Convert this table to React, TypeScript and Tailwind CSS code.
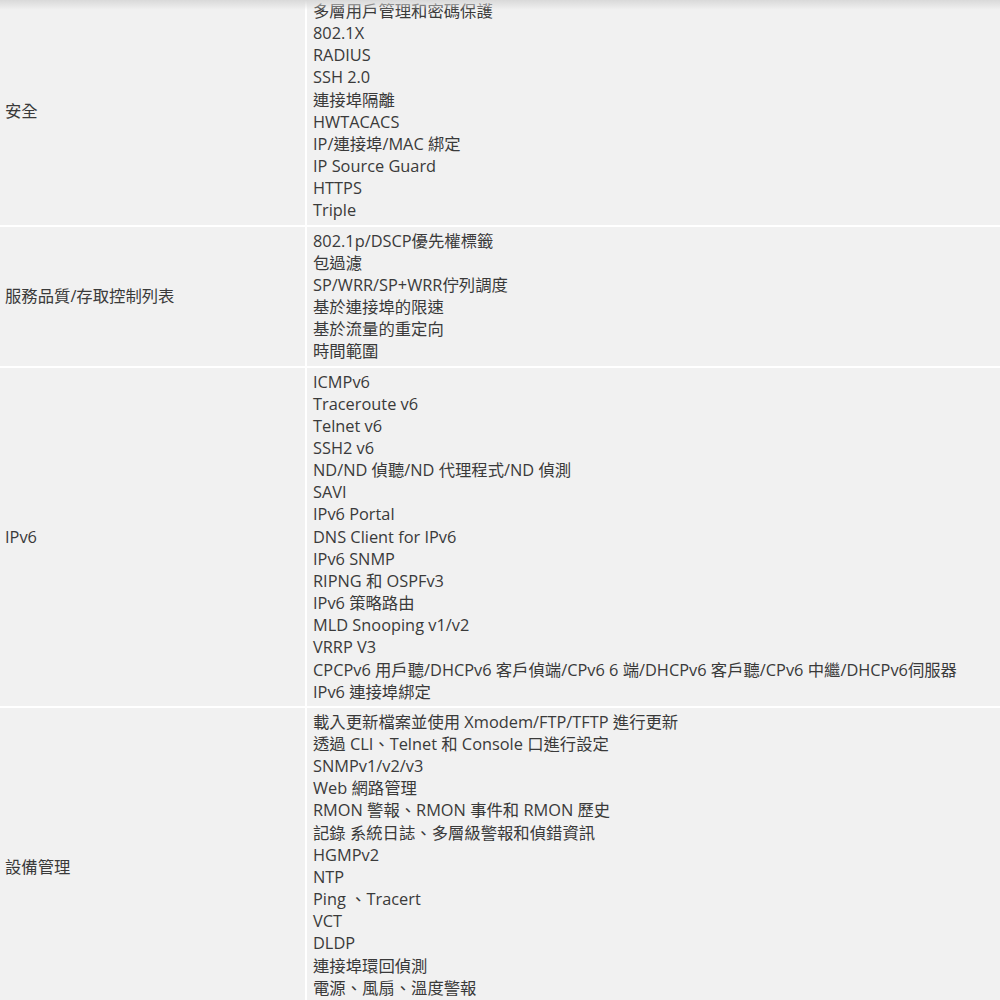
const rows = [
  {
    label: "安全",
    items: [
      "多層用戶管理和密碼保護",
      "802.1X",
      "RADIUS",
      "SSH 2.0",
      "連接埠隔離",
      "HWTACACS",
      "IP/連接埠/MAC 綁定",
      "IP Source Guard",
      "HTTPS",
      "Triple",
    ],
  },
  {
    label: "服務品質/存取控制列表",
    items: [
      "802.1p/DSCP優先權標籤",
      "包過濾",
      "SP/WRR/SP+WRR佇列調度",
      "基於連接埠的限速",
      "基於流量的重定向",
      "時間範圍",
    ],
  },
  {
    label: "IPv6",
    items: [
      "ICMPv6",
      "Traceroute v6",
      "Telnet v6",
      "SSH2 v6",
      "ND/ND 偵聽/ND 代理程式/ND 偵測",
      "SAVI",
      "IPv6 Portal",
      "DNS Client for IPv6",
      "IPv6 SNMP",
      "RIPNG 和 OSPFv3",
      "IPv6 策略路由",
      "MLD Snooping v1/v2",
      "VRRP V3",
      "CPCPv6 用戶聽/DHCPv6 客戶偵端/CPv6 6 端/DHCPv6 客戶聽/CPv6 中繼/DHCPv6伺服器",
      "IPv6 連接埠綁定",
    ],
  },
  {
    label: "設備管理",
    items: [
      "載入更新檔案並使用 Xmodem/FTP/TFTP 進行更新",
      "透過 CLI、Telnet 和 Console 口進行設定",
      "SNMPv1/v2/v3",
      "Web 網路管理",
      "RMON 警報、RMON 事件和 RMON 歷史",
      "記錄 系統日誌、多層級警報和偵錯資訊",
      "HGMPv2",
      "NTP",
      "Ping 、Tracert",
      "VCT",
      "DLDP",
      "連接埠環回偵測",
      "電源、風扇、溫度警報",
    ],
  },
];

export default function App() {
  return (
    <div
      className="relative h-[1000px] w-[1000px] overflow-hidden bg-[#f1f1f1] text-[16.35px] leading-[22.15px] text-[#3a3a3a]"
      style={{ fontFamily: '"Open Sans", "Noto Sans CJK TC", sans-serif' }}
    >
      <table className="w-full border-collapse">
        <tbody>
          {rows.map((row, i) => {
            const pad = i === 0 ? "pt-0 pb-[3px]" : "pt-[3px] pb-[3px]";
            return (
              <tr key={row.label} className={i > 0 ? "border-t-2 border-white" : ""}>
                <td className={`w-[306px] border-r-2 border-white pl-[5px] align-middle ${pad}`}>
                  {row.label}
                </td>
                <td className={`pl-[6px] align-top ${pad}`}>
                  {row.items.map((item) => (
                    <div key={item} className="whitespace-nowrap">{item}</div>
                  ))}
                  {/* row continues below the fold */}
                  {i === rows.length - 1 && <div className="h-[24px]" />}
                </td>
              </tr>
            );
          })}
        </tbody>
      </table>
      <div className="pointer-events-none absolute inset-x-0 top-0 h-[10px] bg-gradient-to-b from-[#d9d9d9] to-transparent" />
    </div>
  );
}
